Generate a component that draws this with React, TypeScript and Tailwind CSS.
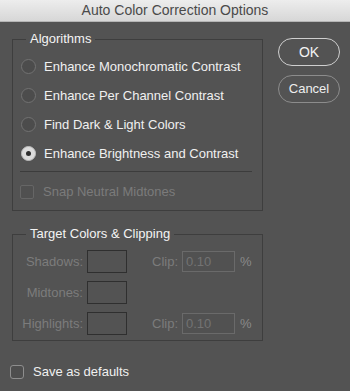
import type { ReactNode } from "react";

const options = [
  "Enhance Monochromatic Contrast",
  "Enhance Per Channel Contrast",
  "Find Dark & Light Colors",
  "Enhance Brightness and Contrast",
];

function Radio({ label, checked }: { label: string; checked?: boolean }) {
  return (
    <div className="flex h-[29px] items-center gap-[8px] pl-[8px]">
      {checked ? (
        <span className="flex h-[15px] w-[15px] items-center justify-center rounded-full border border-[#bdbdbd] bg-[#dcdcdc]">
          <span className="h-[5px] w-[5px] rounded-full bg-[#2e2e2e]" />
        </span>
      ) : (
        <span className="h-[15px] w-[15px] rounded-full border border-[#727272] bg-[#4c4c4c]" />
      )}
      <span className="text-[13px] text-[#f0f0f0]">{label}</span>
    </div>
  );
}

function Group({ title, children, className }: { title: string; children: ReactNode; className?: string }) {
  return (
    <fieldset className={`border border-[#3e3e3e] ${className ?? ""}`}>
      <legend className="ml-[13px] px-[4px] text-[13px] leading-[16px] text-[#f4f4f4]">
        {title}
      </legend>
      {children}
    </fieldset>
  );
}

function TargetRow({ label, clip }: { label: string; clip?: boolean }) {
  return (
    <div className="flex h-[31px] items-center">
      <span className="w-[70px] text-right text-[13px] text-[#7c7c7c]">{label}</span>
      <span className="ml-[4px] h-[23px] w-[40px] border border-[#2f2f2f]" />
      {clip && (
        <>
          <span className="ml-[25px] text-[13px] text-[#7c7c7c]">Clip:</span>
          <span className="ml-[4px] flex h-[21px] w-[53px] items-center border border-[#6a6a6a] bg-[#515151] pl-[3px] text-[13px] text-[#737373]">
            0.10
          </span>
          <span className="ml-[5px] text-[13px] text-[#8a8a8a]">%</span>
        </>
      )}
    </div>
  );
}

export default function App() {
  return (
    <div className="h-[391px] w-[350px] overflow-hidden bg-[#535353] font-['Liberation_Sans',Arial,sans-serif]">
      {/* Title bar */}
      <div className="flex h-[22px] items-center justify-center border-b border-[#b5b5b5] bg-gradient-to-b from-[#ededed] to-[#d7d7d7] text-[14px] text-[#4a4a4a]">
        Auto Color Correction Options
      </div>

      <div className="flex pl-[12px] pt-[9px]">
        <div className="w-[251px]">
          <Group title="Algorithms" className="pb-[4px]">
            <div className="pt-[5px]">
              {options.map((o, i) => (
                <Radio key={o} label={o} checked={i === 3} />
              ))}
            </div>
            <div className="ml-[7px] mr-[10px] mt-[3px] h-[1px] bg-[#3c3c3c]" />
            <div className="mt-[6px] flex h-[28px] items-center gap-[9px] pl-[7px]">
              <span className="h-[14px] w-[14px] rounded-[2px] border border-[#666666] bg-[#505050]" />
              <span className="text-[13px] text-[#7b7b7b]">Snap Neutral Midtones</span>
            </div>
          </Group>

          <Group title="Target Colors & Clipping" className="mt-[15px] pb-[1px]">
            <div className="pt-[4px]">
              <TargetRow label="Shadows:" clip />
              <TargetRow label="Midtones:" />
              <TargetRow label="Highlights:" clip />
            </div>
          </Group>
        </div>

        <div className="ml-[15px] mt-[7px] flex flex-col gap-[9px]">
          <button className="h-[28px] w-[62px] rounded-full border border-[#cfcfcf] text-[14px] text-[#f4f4f4]">
            OK
          </button>
          <button className="h-[28px] w-[62px] rounded-full border border-[#8c8c8c] text-[13px] text-[#eeeeee]">
            Cancel
          </button>
        </div>
      </div>

      <div className="mt-[17px] flex h-[28px] items-center gap-[9px] pl-[10px]">
        <span className="h-[14px] w-[14px] rounded-[3px] border border-[#8e8e8e] bg-[#4e4e4e]" />
        <span className="text-[13px] text-[#f0f0f0]">Save as defaults</span>
      </div>
    </div>
  );
}
